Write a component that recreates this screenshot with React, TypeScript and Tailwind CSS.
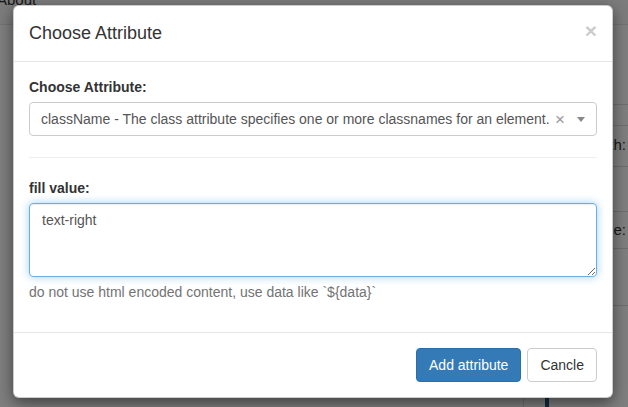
import React from 'react'

const sidebarRows = [
  { label: '', h: 'h-[80px]' },
  { label: '', h: 'h-[21px]' },
  { label: 'Width:', h: 'h-[41px]' },
  { label: '', h: 'h-[46px]' },
  { label: 'Name:', h: 'h-[37px]' },
  { label: '', h: 'h-[57px]' },
]

const App = () => {
  return (
    <div
      className="relative h-[407px] w-[628px] overflow-hidden bg-white text-[#333]"
      style={{ fontFamily: '"Liberation Sans", Arial, sans-serif' }}
    >
      {/* page under the modal */}
      <div className="flex h-[25px] border-b border-[#e7e7e7] bg-[#f8f8f8]">
        <span className="-mt-[11px] -ml-[3px] text-[15px]">About</span>
      </div>
      <div className="flex h-[382px]">
        <div className="flex-1" />
        <div className="flex w-[105px] flex-col border-l border-[#ddd]">
          {sidebarRows.map((row, i) => (
            <div key={i} className={`flex items-center justify-end border-b border-[#ddd] ${row.h}`}>
              {row.label && <span className="mr-[2px] text-[15px]">{row.label}</span>}
            </div>
          ))}
          <div className="ml-[21px] mt-[89px] h-[12px] w-[4px] bg-[#23527c]" />
        </div>
      </div>

      {/* backdrop */}
      <div className="absolute inset-0 bg-black/50" />

      {/* modal */}
      <div className="absolute left-[13px] top-[5px] w-[600px] rounded-[6px] border border-black/20 bg-white text-sm shadow-[0_5px_15px_rgba(0,0,0,0.5)]">
        <div className="flex items-center justify-between border-b border-[#e5e5e5] px-[15px] py-[15px]">
          <h4 className="text-[18px] leading-[25px]">Choose Attribute</h4>
          <button className="-mt-[7px] text-[21px] font-bold leading-none text-black opacity-20">×</button>
        </div>

        <div className="p-[15px]">
          <label className="mb-[5px] block font-bold leading-5">Choose Attribute:</label>
          <div className="flex h-[34px] items-center rounded-[4px] border border-[#ccc] pl-[11px] pr-[11px]">
            <span className="flex-1 truncate text-[#555]">
              className - The class attribute specifies one or more classnames for an element.
            </span>
            <span className="mr-[12px] text-[17px] leading-none text-[#999]">×</span>
            <span className="h-0 w-0 border-x-[4px] border-t-[5px] border-x-transparent border-t-[#888]" />
          </div>

          <hr className="mb-[20px] mt-[21px] border-t border-[#eee]" />

          <label className="mb-[5px] block font-bold leading-5">fill value:</label>
          <textarea
            className="block h-[74px] w-full rounded-[4px] border border-[#66afe9] px-3 py-[6px] leading-5 text-[#555] shadow-[inset_0_1px_1px_rgba(0,0,0,0.075),0_0_8px_rgba(102,175,233,0.6)] outline-none"
            defaultValue="text-right"
            readOnly
          />
          <p className="mb-[15px] mt-[5px] leading-5 text-[#737373]">
            do not use html encoded content, use data like `${'{'}data{'}'}`
          </p>
        </div>

        <div className="flex justify-end gap-[6px] border-t border-[#e5e5e5] p-[15px]">
          <button className="h-[34px] rounded-[4px] border border-[#2e6da4] bg-[#337ab7] px-3 text-white">
            Add attribute
          </button>
          <button className="h-[34px] rounded-[4px] border border-[#ccc] bg-white px-3 text-[#333]">Cancle</button>
        </div>
      </div>
    </div>
  )
}

export default App
